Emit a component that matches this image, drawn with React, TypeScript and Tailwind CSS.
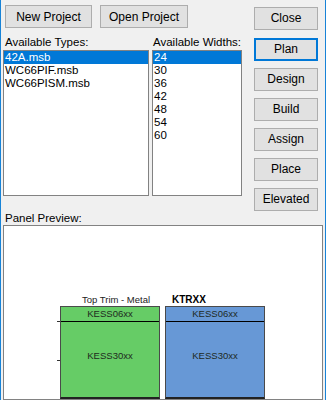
const types = ['42A.msb', 'WC66PIF.msb', 'WC66PISM.msb']
const widths = ['24', '30', '36', '42', '48', '54', '60']
const actions = ['Design', 'Build', 'Assign', 'Place', 'Elevated']

function WinButton({ label, width, focused }: { label: string; width: string; focused?: boolean }) {
  return (
    <button
      className={`${width} h-[23px] shrink-0 bg-[#e1e1e1] text-[12px] leading-none text-black ${
        focused ? 'border-2 border-[#0078d7]' : 'border border-[#adadad]'
      }`}
    >
      {label}
    </button>
  )
}

function ListBox({ items, width }: { items: string[]; width: string }) {
  return (
    <div className={`${width} h-[146px] border border-[#828282] bg-white`}>
      {items.map((item, i) => (
        <div
          key={item}
          className={`h-[13px] pl-[1px] text-[11.5px] leading-[13px] ${i === 0 ? 'bg-[#0078d7] text-white' : 'text-black'}`}
        >
          {item}
        </div>
      ))}
    </div>
  )
}

function PanelBlock({ color }: { color: string }) {
  return (
    <div className={`relative flex h-[93px] w-[100px] flex-col border border-[#4a4a4a] border-b-2 border-b-[#222] ${color}`}>
      <div className="flex h-[15px] items-center justify-center border-b border-black text-[9.5px] text-[#1e2a1e]">
        KESS06xx
      </div>
      <div className="flex flex-1 items-center justify-center pb-[6px] text-[9.5px] text-[#1e2a1e]">
        KESS30xx
      </div>
    </div>
  )
}

export default function App() {
  return (
    <div
      className="flex h-[400px] w-[326px] flex-col overflow-hidden border-x border-[#1883d7] bg-[#f0f0f0] text-black"
      style={{ fontFamily: '"Liberation Sans", Arial, sans-serif' }}
    >
      <div className="flex h-[211px] shrink-0">
        <div className="w-[252px]">
          <div className="flex gap-[8px] pl-[4px] pt-[5px]">
            <WinButton label="New Project" width="w-[87px]" />
            <WinButton label="Open Project" width="w-[88px]" />
          </div>
          <div className="mt-[7px] flex h-[15px] text-[11.5px] leading-[14px]">
            <span className="w-[152px] pl-[4px]">Available Types:</span>
            <span>Available Widths:</span>
          </div>
          <div className="flex gap-[3px] pl-[2px]">
            <ListBox items={types} width="w-[146px]" />
            <ListBox items={widths} width="w-[90px]" />
          </div>
        </div>
        <div className="ml-[1px] flex flex-col gap-[7px] pt-[5px]">
          <div className="mb-[1px]">
            <WinButton label="Close" width="w-[64px]" />
          </div>
          <WinButton label="Plan" width="w-[64px]" focused />
          {actions.map((a) => (
            <WinButton key={a} label={a} width="w-[64px]" />
          ))}
        </div>
      </div>

      <div className="h-[14px] shrink-0 pl-[4px] text-[11.5px] leading-[14px]">Panel Preview:</div>

      <div className="ml-[2px] w-[320px] flex-1 border border-[#828282] bg-white pl-[56px] pt-[65px]">
        <div className="flex h-[15px] items-end gap-[6px]">
          <div className="w-[100px] pl-[22px] text-[9.5px] leading-[12px] text-[#222]">Top Trim - Metal</div>
          <div className="w-[100px] pl-[6px] text-[10px] font-bold leading-[12px]">KTRXX</div>
        </div>
        <div className="flex gap-[5px]">
          <div className="relative">
            <div className="absolute left-[-3px] top-[15px] h-[1px] w-[3px] bg-[#333]" />
            <div className="absolute left-[-3px] top-[54px] h-[1px] w-[3px] bg-[#333]" />
            <PanelBlock color="bg-[#66cc66]" />
          </div>
          <PanelBlock color="bg-[#6798d6]" />
        </div>
      </div>
    </div>
  )
}
